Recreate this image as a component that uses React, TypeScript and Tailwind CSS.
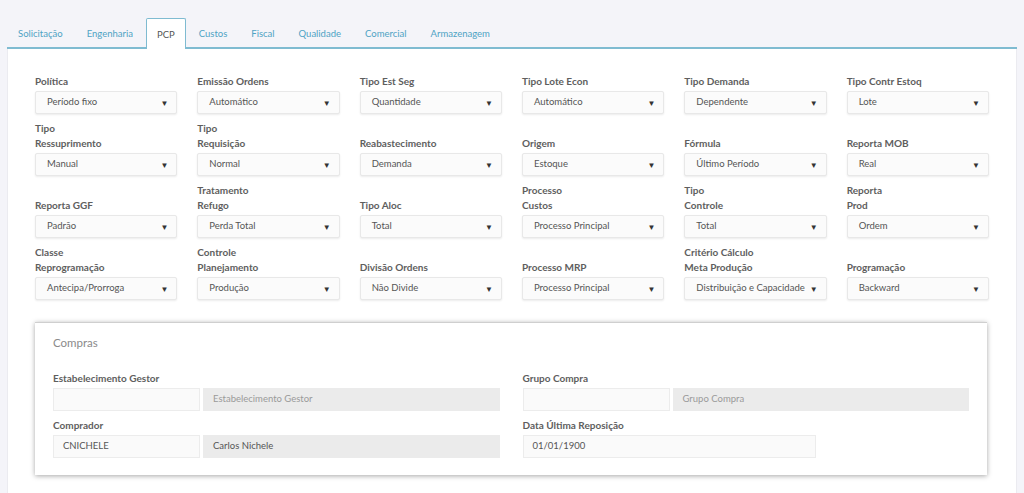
import React from 'react';

type Field = { label: string[]; value: string };

const tabs = ['Solicitação', 'Engenharia', 'PCP', 'Custos', 'Fiscal', 'Qualidade', 'Comercial', 'Armazenagem'];

const rows: Field[][] = [
  [
    { label: ['Política'], value: 'Período fixo' },
    { label: ['Emissão Ordens'], value: 'Automático' },
    { label: ['Tipo Est Seg'], value: 'Quantidade' },
    { label: ['Tipo Lote Econ'], value: 'Automático' },
    { label: ['Tipo Demanda'], value: 'Dependente' },
    { label: ['Tipo Contr Estoq'], value: 'Lote' },
  ],
  [
    { label: ['Tipo', 'Ressuprimento'], value: 'Manual' },
    { label: ['Tipo', 'Requisição'], value: 'Normal' },
    { label: ['Reabastecimento'], value: 'Demanda' },
    { label: ['Origem'], value: 'Estoque' },
    { label: ['Fórmula'], value: 'Último Período' },
    { label: ['Reporta MOB'], value: 'Real' },
  ],
  [
    { label: ['Reporta GGF'], value: 'Padrão' },
    { label: ['Tratamento', 'Refugo'], value: 'Perda Total' },
    { label: ['Tipo Aloc'], value: 'Total' },
    { label: ['Processo', 'Custos'], value: 'Processo Principal' },
    { label: ['Tipo', 'Controle'], value: 'Total' },
    { label: ['Reporta', 'Prod'], value: 'Ordem' },
  ],
  [
    { label: ['Classe', 'Reprogramação'], value: 'Antecipa/Prorroga' },
    { label: ['Controle', 'Planejamento'], value: 'Produção' },
    { label: ['Divisão Ordens'], value: 'Não Divide' },
    { label: ['Processo MRP'], value: 'Processo Principal' },
    { label: ['Critério Cálculo', 'Meta Produção'], value: 'Distribuição e Capacidade' },
    { label: ['Programação'], value: 'Backward' },
  ],
];

const SelectField: React.FC<{ field: Field }> = ({ field }) => (
  <div className="flex flex-col justify-end">
    <div className="mb-[2px] text-[10px] font-bold leading-[15px] text-[#5e5e5e]">
      {field.label.map((l) => (
        <div key={l}>{l}</div>
      ))}
    </div>
    <div className="flex h-[23px] items-center justify-between rounded-[2px] border border-[#e8e8e8] bg-[#fbfbfb] pl-[11px] pr-[8px] shadow-[0_1px_2px_rgba(0,0,0,0.08)]">
      <span className="text-[9.5px] text-[#555]">{field.value}</span>
      <span className="text-[8px] text-[#333]">▼</span>
    </div>
  </div>
);

export default function App() {
  return (
    <div className="min-h-screen bg-[#f4f4f9] px-[7px] pt-[19px] font-['Lato',sans-serif]">
      {/* Tabs */}
      <div className="flex h-[30px] items-end border-b-2 border-[#7fbbd1]">
        {tabs.map((t) =>
          t === 'PCP' ? (
            <div
              key={t}
              className="-mb-[2px] mr-[2px] flex h-[31px] items-center rounded-t-[2px] border-x border-t border-[#7fbbd1] bg-white px-[10px] pt-[3px] text-[9.5px] text-[#555]"
            >
              {t}
            </div>
          ) : (
            <div key={t} className="mr-[2px] flex h-[29px] items-center px-[11px] pt-[3px] text-[9.5px] text-[#4fa3c4]">
              {t}
            </div>
          )
        )}
      </div>

      {/* Panel */}
      <div className="h-[445px] border-x border-[#ebebf0] bg-white px-[27px] pt-[25px]">
        <div className="flex flex-col gap-y-[7px]">
          {rows.map((row, i) => (
            <div key={i} className="grid grid-cols-6 gap-x-[20px]">
              {row.map((f) => (
                <SelectField key={f.value + f.label.join()} field={f} />
              ))}
            </div>
          ))}
        </div>

        {/* Compras */}
        <div className="mr-[2px] mt-[22px] border-t border-[#cfcfcf] bg-white px-[18px] pb-[17px] pt-[12px] shadow-[0_1px_5px_rgba(0,0,0,0.35)]">
          <div className="text-[11.5px] leading-[16px] text-[#8a8a8a]">Compras</div>
          <div className="mt-[20px] grid grid-cols-2 gap-x-[23px]">
            <div>
              <div className="mb-[2px] text-[10px] font-bold leading-[15px] text-[#5e5e5e]">Estabelecimento Gestor</div>
              <div className="flex gap-[3px]">
                <div className="h-[23px] w-[147px] border border-[#ececec] bg-[#fafafa]" />
                <div className="flex h-[23px] flex-1 items-center bg-[#ebebeb] pl-[10px] text-[9.5px] text-[#9a9a9a]">
                  Estabelecimento Gestor
                </div>
              </div>
              <div className="mb-[2px] mt-[7px] text-[10px] font-bold leading-[15px] text-[#5e5e5e]">Comprador</div>
              <div className="flex gap-[3px]">
                <div className="flex h-[23px] w-[147px] items-center border border-[#ececec] bg-[#fafafa] pl-[9px] text-[9.5px] text-[#555]">
                  CNICHELE
                </div>
                <div className="flex h-[23px] flex-1 items-center bg-[#ebebeb] pl-[10px] text-[9.5px] text-[#555]">
                  Carlos Nichele
                </div>
              </div>
            </div>
            <div>
              <div className="mb-[2px] text-[10px] font-bold leading-[15px] text-[#5e5e5e]">Grupo Compra</div>
              <div className="flex gap-[3px]">
                <div className="h-[23px] w-[147px] border border-[#ececec] bg-[#fafafa]" />
                <div className="flex h-[23px] flex-1 items-center bg-[#ebebeb] pl-[10px] text-[9.5px] text-[#9a9a9a]">
                  Grupo Compra
                </div>
              </div>
              <div className="mb-[2px] mt-[7px] text-[10px] font-bold leading-[15px] text-[#5e5e5e]">Data Última Reposição</div>
              <div className="flex h-[23px] w-[293px] items-center border border-[#ececec] bg-[#fafafa] pl-[9px] text-[9.5px] text-[#555]">
                01/01/1900
              </div>
            </div>
          </div>
        </div>
      </div>
    </div>
  );
}
